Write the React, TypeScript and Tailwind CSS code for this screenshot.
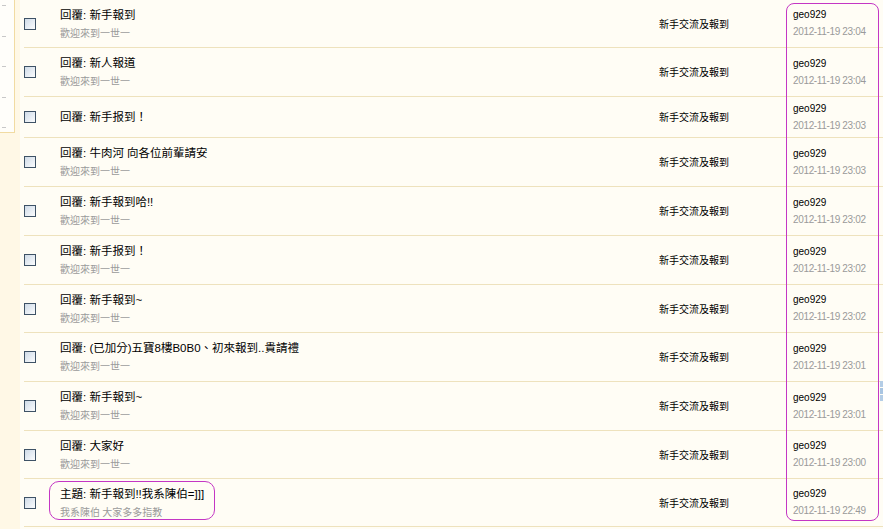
import React from "react";

type Row = { title: string; sub?: string; time: string; h: string };

const rows: Row[] = [
  { title: "回覆: 新手報到", sub: "歡迎來到一世一", time: "2012-11-19 23:04", h: "h-[48px]" },
  { title: "回覆: 新人報道", sub: "歡迎來到一世一", time: "2012-11-19 23:04", h: "h-[49px]" },
  { title: "回覆: 新手报到！", time: "2012-11-19 23:03", h: "h-[41px]" },
  { title: "回覆: 牛肉河 向各位前輩請安", sub: "歡迎來到一世一", time: "2012-11-19 23:03", h: "h-[49px]" },
  { title: "回覆: 新手報到哈!!", sub: "歡迎來到一世一", time: "2012-11-19 23:02", h: "h-[49px]" },
  { title: "回覆: 新手报到！", sub: "歡迎來到一世一", time: "2012-11-19 23:02", h: "h-[49px]" },
  { title: "回覆: 新手報到~", sub: "歡迎來到一世一", time: "2012-11-19 23:02", h: "h-[48px]" },
  { title: "回覆: (已加分)五寶8樓B0B0、初來報到..貴請禮", sub: "歡迎來到一世一", time: "2012-11-19 23:01", h: "h-[49px]" },
  { title: "回覆: 新手報到~", sub: "歡迎來到一世一", time: "2012-11-19 23:01", h: "h-[49px]" },
  { title: "回覆: 大家好", sub: "歡迎來到一世一", time: "2012-11-19 23:00", h: "h-[48px]" },
  { title: "主題: 新手報到!!我系陳伯=]]]", sub: "我系陳伯 大家多多指教", time: "2012-11-19 22:49", h: "h-[48px]" },
];

const cjk = "font-['Noto_Sans_CJK_TC','Noto_Sans_CJK_SC',sans-serif]";
const mixed = "font-['Liberation_Sans','Noto_Sans_CJK_TC','Noto_Sans_CJK_SC',sans-serif]";

function Check() {
  return (
    <div className="w-[12px] h-[12px] border border-[#3e5266] bg-gradient-to-br from-[#cfdbe8] to-[#fbfcfd]" />
  );
}

export default function App() {
  return (
    <div className="relative w-[883px] h-[529px] overflow-hidden bg-[#fffdf5] flex">
      {/* left strip */}
      <div className="w-[20px] shrink-0 bg-[#fff8e6]">
        <div className="w-[15px] h-[133px] bg-[#fffefa] border-r border-b border-[#f1dba2] flex flex-col pt-[5px] gap-[29.5px]">
          <div className="ml-[2px] w-[4px] h-[1px] bg-[#c8c8c8]" />
          <div className="ml-[2px] w-[4px] h-[1px] bg-[#c8c8c8]" />
          <div className="ml-[2px] w-[4px] h-[1px] bg-[#c8c8c8]" />
          <div className="ml-[2px] w-[4px] h-[1px] bg-[#c8c8c8]" />
          <div className="ml-[2px] w-[4px] h-[1px] bg-[#c8c8c8]" />
        </div>
      </div>

      {/* main list */}
      <div className="flex-1 flex flex-col">
        {rows.map((r, i) => (
          <div
            key={i}
            className={`${r.h} shrink-0 ml-[4px] border-b border-[#eee2bd] flex items-center`}
          >
            <div className="w-[36px] shrink-0 flex items-center">
              <Check />
            </div>
            <div className="flex-1 flex flex-col">
              <div className={`text-[11.5px] leading-[16px] text-black ${mixed}`}>{r.title}</div>
              {r.sub && (
                <div className={`text-[10px] leading-[16px] mt-[2px] text-[#9a9a9a] ${cjk}`}>{r.sub}</div>
              )}
            </div>
            <div className={`w-[134px] shrink-0 text-[10px] leading-[16px] text-black ${cjk}`}>
              新手交流及報到
            </div>
            <div className={`w-[90px] shrink-0 flex flex-col ${mixed}`}>
              <div className="text-[10px] leading-[16px] text-black">geo929</div>
              <div className="text-[10px] leading-[16px] mt-[1px] text-[#9a9a9a] tracking-[-0.35px]">
                {r.time}
              </div>
            </div>
          </div>
        ))}
      </div>

      {/* annotation overlays */}
      <div className="absolute left-[786px] top-[3px] w-[93px] h-[518px] border border-[#c436c4] rounded-[8px]" />
      <div className="absolute left-[49px] top-[481px] w-[166px] h-[39px] border border-[#c436c4] rounded-[10px]" />

      {/* right edge scroll fragment */}
      <div className="absolute left-[880px] top-[381px] w-[3px] h-[20px] flex flex-col gap-[1px]">
        <div className="h-[6px] bg-[#b4cde6]" />
        <div className="h-[6px] bg-[#a9c5e2]" />
        <div className="h-[6px] bg-[#b4cde6]" />
      </div>
    </div>
  );
}
